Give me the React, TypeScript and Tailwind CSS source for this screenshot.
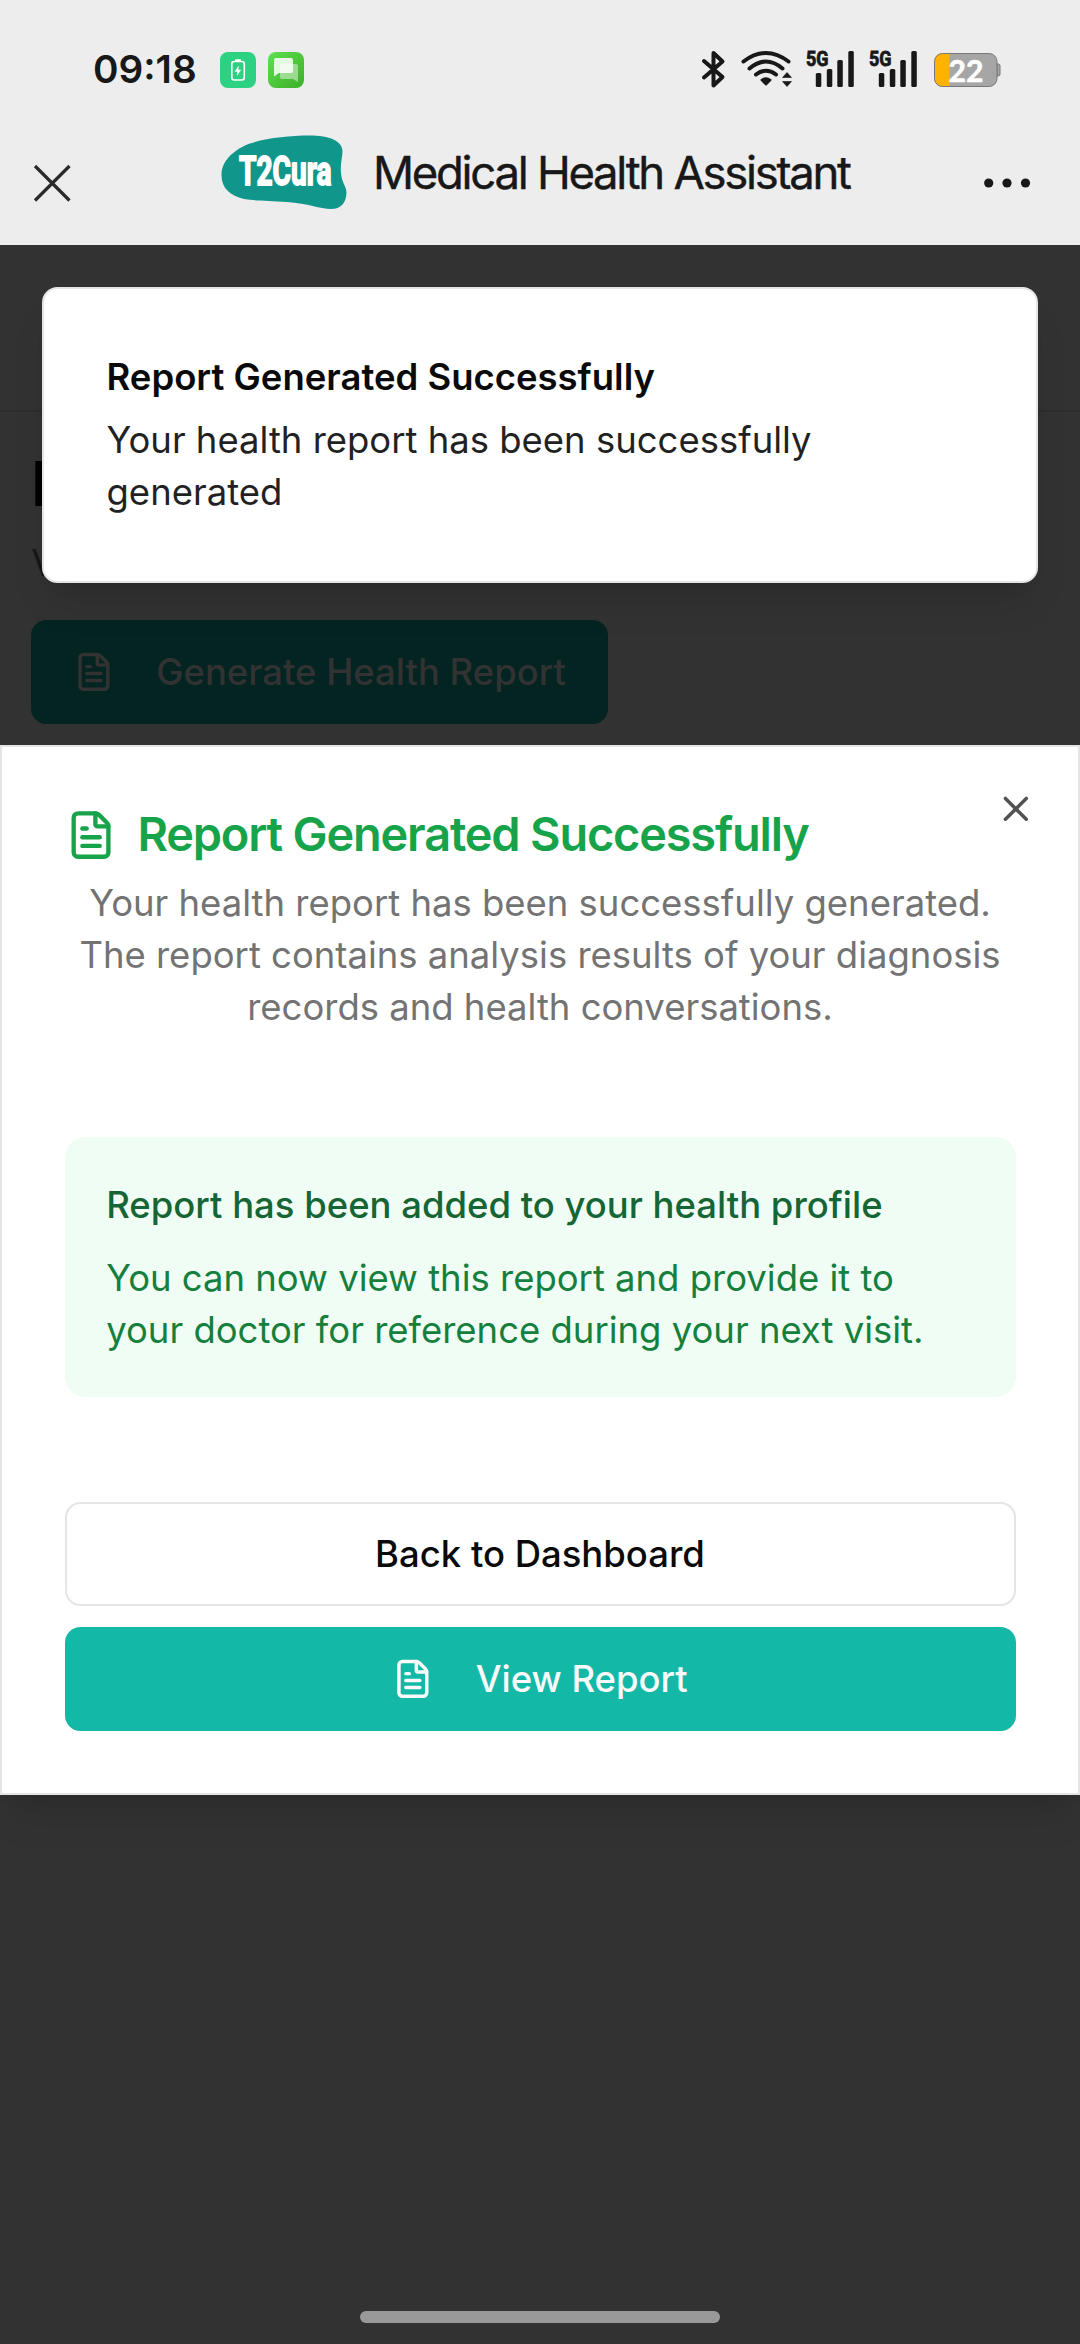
import { FileText, X } from "lucide-react";

function StatusIcons() {
  return (
    <svg className="-mt-[2px] h-[44px] w-[310px]" viewBox="695 47 310 44" fill="none">
      <path d="M704 61 L722.5 77 L713.5 85.5 V53 L722.5 61.5 L704 77.5" stroke="#181818" strokeWidth="4" strokeLinecap="round" strokeLinejoin="round" />
      <g stroke="#181818" strokeWidth="4" strokeLinecap="round">
        <path d="M743.5 61.5 Q766 44.500 788.500 61.500" />
        <path d="M749.500 68.500 Q766 54.500 782.500 68.500" />
        <path d="M756 74.500 Q766 67 776 74.500" />
      </g>
      <path d="M761.500 80 Q766 76.500 770.500 80 L766 84.500 Z" fill="#181818" stroke="#181818" strokeWidth="2" strokeLinejoin="round" />
      <path d="M787 72.500 L791.500 77.500 H782.500 Z M782.500 81.500 H791.500 L787 86.500 Z" fill="#181818" stroke="#181818" strokeWidth=".6" />
      {[0, 63].map((dx) => (
        <g key={dx} transform={`translate(${dx} 0)`} fill="#181818">
          <text x="806" y="65.500" fontSize="20.500" fontWeight="700" fontFamily="Roboto, sans-serif" stroke="#181818" strokeWidth=".8" textLength="22.500" lengthAdjust="spacingAndGlyphs">5G</text>
          <rect x="815.800" y="73" width="5.500" height="14" rx="1.500" />
          <rect x="826.800" y="69" width="5.500" height="18" rx="1.500" />
          <rect x="837.300" y="60" width="5.500" height="27" rx="1.500" />
          <rect x="848.300" y="51" width="5.500" height="36" rx="1.500" />
        </g>
      ))}
      <path d="M997 64 h1.500 q1.500 0 1.500 2 v8 q0 2 -1.500 2 h-1.500 z" fill="#a6a6a6" stroke="#777" />
      <rect x="934.500" y="53.500" width="62.500" height="33" rx="8" fill="#a6a6a6" />
      <path d="M949.500 53.500 H942.500 a8 8 0 0 0 -8 8 V78.500 a8 8 0 0 0 8 8 H949.500 Z" fill="#ffb300" />
      <rect x="934.500" y="53.500" width="62.500" height="33" rx="8" stroke="#777" />
      <text x="948.500" y="81.500" fontSize="31" fontWeight="700" fontFamily="Lato, sans-serif" fill="#fff" stroke="#fff" strokeWidth=".6" textLength="35" lengthAdjust="spacingAndGlyphs">22</text>
    </svg>
  );
}

function ChargeBadge() {
  return (
    <svg className="size-9" viewBox="0 0 36 36" fill="none">
      <rect width="36" height="36" rx="8" fill="#2cd182" />
      <rect x="11.800" y="9.500" width="12.500" height="18.500" rx="2.500" stroke="#fff" strokeWidth="1.600" />
      <rect x="15" y="7.200" width="6" height="2.500" rx="1" fill="#fff" />
      <path d="M18.800 13.500 L14.600 19.700 H17.400 L16.900 24 L21.200 17.800 H18.400 Z" fill="#fff" />
    </svg>
  );
}

function ChatBadge() {
  return (
    <svg className="size-9" viewBox="0 0 36 36" fill="none">
      <defs>
        <linearGradient id="chat" x1="0" y1="0" x2="1" y2="1">
          <stop offset="0" stopColor="#5fe04f" />
          <stop offset="1" stopColor="#3cae28" />
        </linearGradient>
      </defs>
      <rect width="36" height="36" rx="8" fill="url(#chat)" />
      <path d="M13 12 H28 a2 2 0 0 1 2 2 V30 L25 27 H14 a2 2 0 0 1 -2 -2 V13 Z" fill="#fff" fillOpacity=".45" />
      <path d="M8 6 H23 a2 2 0 0 1 2 2 V19 a2 2 0 0 1 -2 2 H11 L6 24.500 V8 a2 2 0 0 1 2 -2 Z" fill="#fff" fillOpacity=".85" />
    </svg>
  );
}

function Logo() {
  return (
    <svg className="h-[76px] w-[128px]" viewBox="220 134 128 76">
      <path d="M250 143.500 C266 138 290 135.500 309 135.500 C330 135.500 342 141 342.500 151 C342.500 157 340 165 341 173 C342 184 346.500 186 346.500 193 C346 203 341 209 331 209 C320 209 308 203.500 287 202 C268 200.500 255 201 244 199 C230 196 221 188 221.500 174 C222 160 235 149 250 143.500 Z" fill="#10968a" />
      <text x="239" y="184.500" fontSize="41" fontWeight="700" fontFamily="Roboto, sans-serif" fill="#fff" stroke="#fff" strokeWidth="1.800" strokeLinejoin="round" textLength="92.500" lengthAdjust="spacingAndGlyphs">T2Cura</text>
    </svg>
  );
}

export default function App() {
  return (
    <div className="relative flex h-[2344px] w-[1080px] flex-col overflow-hidden bg-[#323232] font-[Inter,sans-serif] text-[36.47px] leading-[52.1px] text-[#0a0a0a]">
      <header className="h-[245px] shrink-0 bg-[#ededed] text-[#181818]">
        <div className="flex h-[140px] items-center pl-[93px] pr-[75px]">
          <span className="-mt-[2px] w-[127px] text-[38.7px] font-semibold">09:18</span>
          <div className="flex flex-1 gap-3">
            <ChargeBadge />
            <ChatBadge />
          </div>
          <StatusIcons />
        </div>
        <div className="-mt-[6px] flex items-start">
          <svg className="mt-[29px] ml-[32px] size-10" viewBox="0 0 40 40" stroke="#2b2b2b" strokeWidth="3.200">
            <path d="M3 3 L37.500 37.500 M37.500 3 L3 37.500" />
          </svg>
          <div className="ml-[148px]"><Logo /></div>
          <h1 className="mt-[8px] ml-[25px] w-[610px] text-[45.5px] leading-[62px] tracking-[-2.3px] whitespace-nowrap [-webkit-text-stroke:0.4px_#181818]">Medical Health Assistant</h1>
          <svg className="mt-[43px] h-[12px] w-[48px]" viewBox="983 176.600 48 12" fill="#181818">
            <circle cx="988.700" cy="182.600" r="4.600" />
            <circle cx="1007" cy="182.600" r="4.600" />
            <circle cx="1025.500" cy="182.600" r="4.600" />
          </svg>
        </div>
      </header>

      <div className="h-[167px] shrink-0 border-b-2 border-[#2d2d2d]" />
      <main className="flex flex-col items-start px-[31.2px] pt-[30px]">
        <h2 className="text-[62.5px] leading-[83px] font-bold text-black">Health</h2>
        <p className="mt-[12px] text-[#171717]">View all</p>
        <button className="mt-[31px] flex h-[104px] items-center rounded-[15.6px] bg-[#042421] px-[41.7px] font-medium text-[#323232]">
          <FileText className="mr-[41.7px] size-[41.7px]" />
          Generate Health Report
        </button>
      </main>

      <section className="absolute top-[287px] left-[42px] w-[996px] rounded-[15.6px] border-2 border-[#e5e5e5] bg-white px-[62.5px] pt-[61.8px] pb-[62.5px] shadow-[0_26px_39px_-8px_rgba(0,0,0,0.1),0_10px_16px_-10px_rgba(0,0,0,0.1)]">
        <h3 className="font-semibold">Report Generated Successfully</h3>
        <p className="mt-[11px] opacity-90">Your health report has been successfully<br />generated</p>
      </section>

      <section className="absolute top-[745px] left-0 w-full border-2 border-[#e5e5e5] bg-white p-[62.5px] shadow-[0_26px_39px_-8px_rgba(0,0,0,0.1),0_10px_16px_-10px_rgba(0,0,0,0.1)]">
        <X className="absolute top-[41px] right-[41.6px] size-[41.7px] opacity-70" />
        <div className="-mt-[0.6px] mb-[0.6px] flex items-center gap-[20.8px] text-[#16a34a]">
          <FileText className="size-[52.1px]" />
          <h2 className="-mt-[1.5px] text-[46.9px] leading-[49px] font-semibold tracking-[-0.025em]">Report Generated Successfully</h2>
        </div>
        <p className="mt-[15.6px] text-center text-[#737373]">
          Your health report has been successfully generated.<br />
          The report contains analysis results of your diagnosis<br />
          records and health conversations.
        </p>
        <div className="mt-[104.1px] mb-[104.3px] rounded-[20.8px] bg-[#f0fdf4] p-[41.7px]">
          <p className="font-medium text-[#166534]">Report has been added to your health profile</p>
          <p className="mt-[20.8px] text-[#15803d]">You can now view this report and provide it to<br />your doctor for reference during your next visit.</p>
        </div>
        <div className="flex flex-col gap-[20.8px] font-medium">
          <button className="h-[104.2px] rounded-[15.6px] border-2 border-[#e5e5e5]">Back to Dashboard</button>
          <button className="flex h-[104.2px] items-center justify-center rounded-[15.6px] bg-[#14b8a6] text-[#fafafa]">
            <FileText className="mr-[41.7px] size-[41.7px]" />
            View Report
          </button>
        </div>
      </section>

      <div className="absolute bottom-[21px] left-[360px] h-3 w-[360px] rounded-full bg-[#999]" />
    </div>
  );
}
